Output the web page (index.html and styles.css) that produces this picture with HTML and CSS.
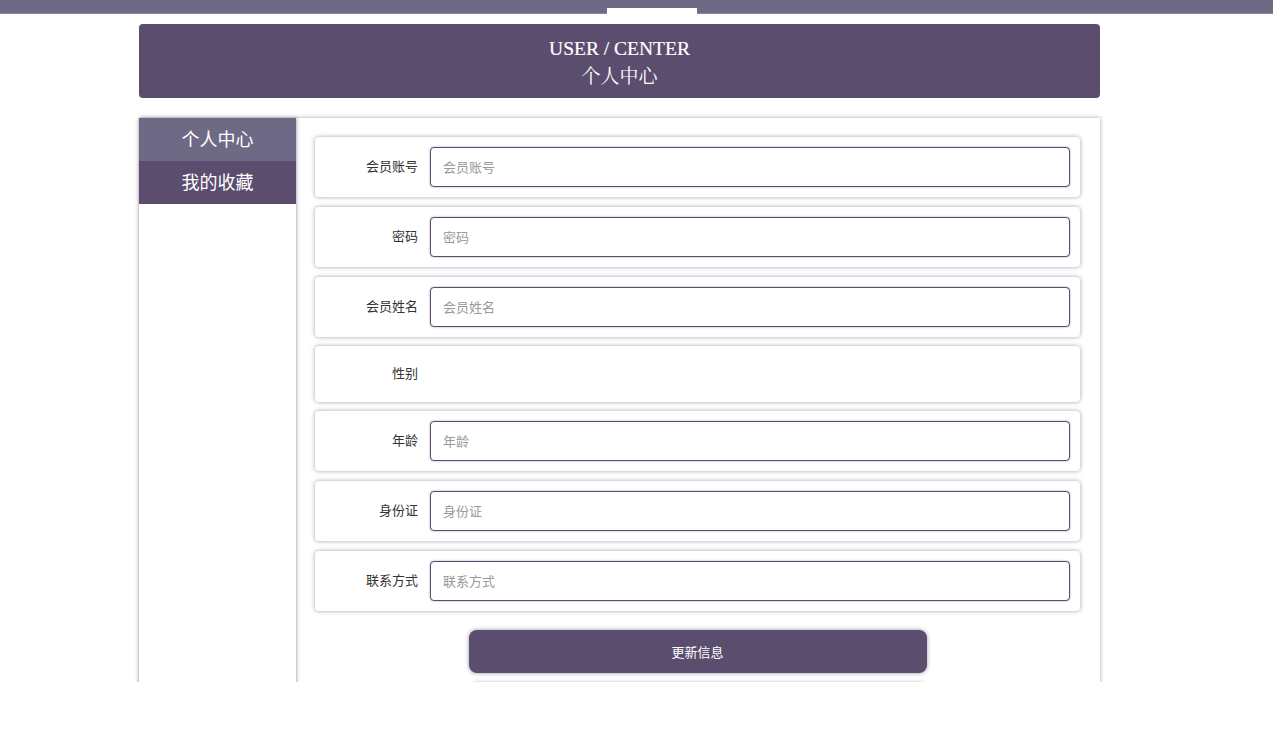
FILE: index.html
```html
<!DOCTYPE html>
<html lang="zh">
<head>
<meta charset="utf-8">
<title>个人中心</title>
<link rel="stylesheet" href="styles.css">
</head>
<body>
<div class="page">
  <div class="topbar"><span class="tab"></span></div>
  <div class="wrap">
    <div class="banner">
      <div class="en">USER / CENTER</div>
      <div class="cn">个人中心</div>
    </div>
    <div class="panel">
      <nav class="side">
        <div class="side-item active">个人中心</div>
        <div class="side-item">我的收藏</div>
      </nav>
      <form class="form">
        <div class="row"><label class="lbl">会员账号</label><input class="inp" placeholder="会员账号"></div>
        <div class="row"><label class="lbl">密码</label><input class="inp" placeholder="密码"></div>
        <div class="row"><label class="lbl">会员姓名</label><input class="inp" placeholder="会员姓名"></div>
        <div class="row row-plain"><label class="lbl">性别</label></div>
        <div class="row"><label class="lbl">年龄</label><input class="inp" placeholder="年龄"></div>
        <div class="row"><label class="lbl">身份证</label><input class="inp" placeholder="身份证"></div>
        <div class="row"><label class="lbl">联系方式</label><input class="inp" placeholder="联系方式"></div>
        <div class="btns">
          <button type="button" class="btn">更新信息</button>
          <div class="btn btn-2" aria-hidden="true"></div>
        </div>
      </form>
    </div>
  </div>
</div>
</body>
</html>
```
FILE: styles.css
```css
html, body {
  margin: 0;
  padding: 0;
  background: #fff;
}
body {
  font-family: "Noto Sans CJK SC", "Noto Sans", sans-serif;
  color: #333;
}
.page {
  height: 682px;
  overflow: hidden;
}
.topbar {
  height: 13px;
  background: #6e6a85;
  border-bottom: 1px solid #8a86a0;
  display: flex;
  justify-content: center;
  align-items: flex-end;
}
.tab {
  display: block;
  width: 90px;
  height: 6px;
  margin-bottom: -1px;
  margin-left: 31px;
  background: #fff;
}
.wrap {
  width: 961px;
  margin: 10px 0 0 139px;
}
.banner {
  height: 74px;
  background: #5a4d6e;
  border-radius: 4px;
  color: #fff;
  text-align: center;
  display: flex;
  flex-direction: column;
  justify-content: center;
}
.banner .en {
  font-family: "Liberation Serif", "Noto Sans CJK SC", serif;
  font-size: 19.5px;
  line-height: 26px;
  margin-top: 2px;
  -webkit-text-stroke: 0.2px #fff;
}
.banner .cn {
  font-family: "Noto Serif CJK SC", "Noto Sans CJK SC", serif;
  font-size: 19px;
  line-height: 26px;
}
.panel {
  margin-top: 20px;
  display: flex;
  align-items: stretch;
  background: #fff;
  box-shadow: 0 0 4px rgba(90, 77, 110, 0.55);
  min-height: 640px;
}
.side {
  width: 157px;
  flex: none;
  box-shadow: 1px 0 3px rgba(90, 77, 110, 0.45);
  position: relative;
}
.side-item {
  height: 43px;
  line-height: 41px;
  background: #5a4d6e;
  color: #fff;
  font-size: 18px;
  text-align: center;
}
.side-item.active {
  background: #6e6a85;
}
.form {
  flex: 1;
  padding: 19px 20px 20px 19px;
  display: flex;
  flex-direction: column;
  gap: 10px;
}
.row {
  height: 60px;
  box-sizing: border-box;
  padding: 10px 10px 10px 0;
  display: flex;
  align-items: center;
  background: #fff;
  border-radius: 4px;
  box-shadow: 0 0 4px rgba(90, 77, 110, 0.55);
}
.row-plain {
  height: 56px;
  margin-top: -1px;
  margin-bottom: -1px;
}
.lbl {
  width: 103px;
  flex: none;
  text-align: right;
  font-size: 13px;
  line-height: 16px;
  padding-bottom: 3px;
  color: #333;
  margin-right: 12px;
}
.inp {
  flex: 1;
  height: 40px;
  box-sizing: border-box;
  border: 1px solid #5a4d6e;
  border-radius: 4px;
  padding: 0 12px 2px;
  font-family: "Noto Sans CJK SC", "Noto Sans", sans-serif;
  font-size: 13px;
  color: #333;
  background: #fff;
  box-shadow: 0 0 2px rgba(90, 77, 110, 0.6);
  outline: none;
}
.inp::placeholder {
  color: #999;
}
.btns {
  margin-top: 9px;
  display: flex;
  flex-direction: column;
  align-items: center;
  gap: 10px;
}
.btn {
  width: 458px;
  height: 43px;
  box-sizing: border-box;
  border: none;
  border-radius: 8px;
  background: #5a4d6e;
  color: #fff;
  font-family: "Noto Sans CJK SC", "Noto Sans", sans-serif;
  font-size: 13px;
  padding-bottom: 2px;
  box-shadow: 0 0 4px rgba(90, 77, 110, 0.6);
}
.btn-2 {
  background: #fff;
}
```
